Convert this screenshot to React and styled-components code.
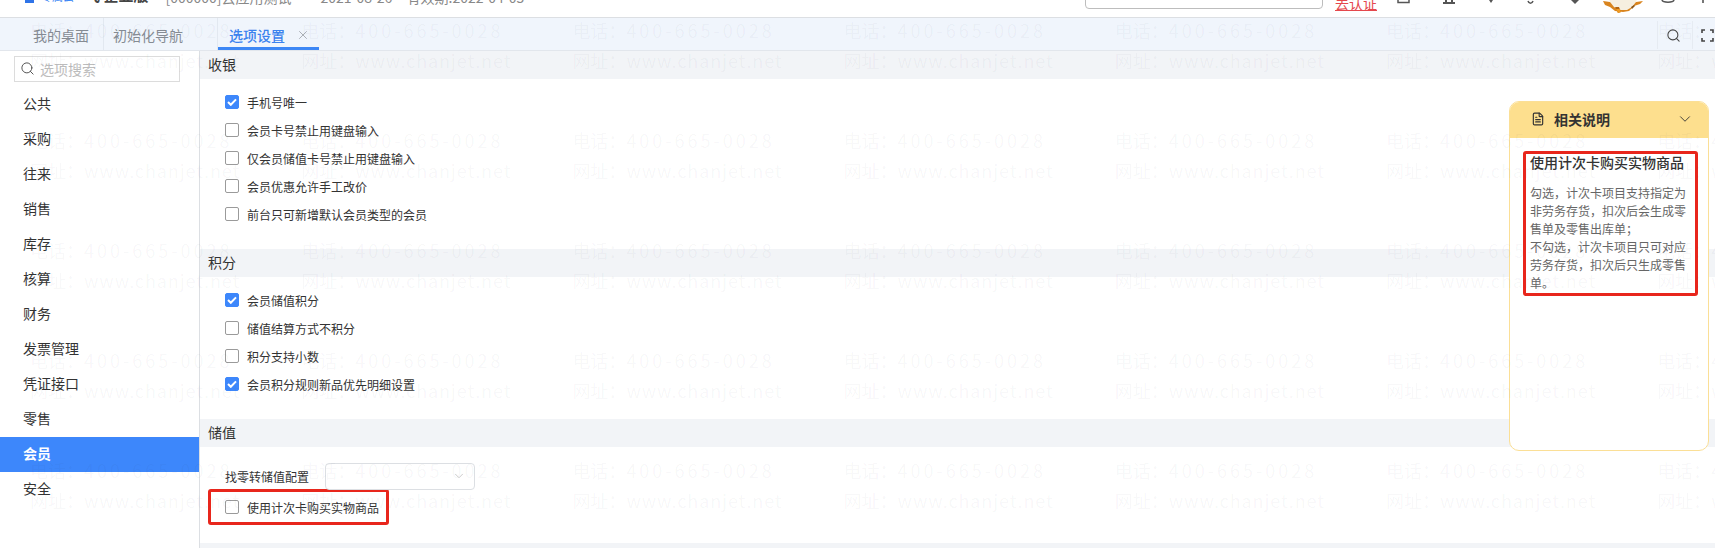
import React from "react";
import styled, { createGlobalStyle } from "styled-components";
import { Search, FileText, ChevronDown, X } from "lucide-react";

const GlobalStyle = createGlobalStyle`
  html, body { margin: 0; padding: 0; background: #fff; }
  body {
    font-family: "Noto Sans CJK SC", "Noto Sans", sans-serif;
    color: #333;
    overflow: hidden;
  }
`;

const Page = styled.div`
  position: relative;
  width: 1715px;
  height: 548px;
  overflow: hidden;
  display: flex;
  flex-direction: column;
`;

/* ---------- top header, cropped by the screenshot ---------- */
const Header = styled.header`
  height: 17px;
  flex: none;
  display: flex;
  justify-content: space-between;
  overflow: hidden;
  border-bottom: 1px solid #dcdfe3;
  background: #fff;
`;
const HeaderGroup = styled.div`
  display: flex;
  align-items: flex-start;
  padding-right: 2px;
`;
const HeaderText = styled.span`
  margin-left: ${(p) => p.$left}px;
  margin-top: ${(p) => p.$top}px;
  font-size: ${(p) => p.$size || 14}px;
  line-height: 20px;
  height: 20px;
  white-space: nowrap;
  font-weight: ${(p) => (p.$bold ? 700 : 400)};
  color: ${(p) => p.$color || "#888"};
  word-spacing: ${(p) => p.$wordGap || 0}px;
  ${(p) => p.$link && "text-decoration: underline;"}
`;
const BrandSquare = styled.span`
  width: 9px;
  height: 3px;
  margin-left: 25px;
  background: #2f74e8;
`;
const AuthInput = styled.div`
  width: 238px;
  height: 20px;
  margin-top: -11px;
  margin-right: 12px;
  box-sizing: border-box;
  border: 1px solid #bdbdbd;
  border-radius: 4px;
  background: #fff;
`;
const HeadIcon = styled.svg`
  display: block;
  margin-left: ${(p) => p.$left}px;
  flex: none;
`;

/* ---------- tab bar ---------- */
const TabBar = styled.nav`
  height: 33px;
  flex: none;
  box-sizing: border-box;
  display: flex;
  background: #f0f5fc;
  border-bottom: 1px solid #e2e6ec;
  padding-left: 23px;
`;
const Tab = styled.div`
  display: flex;
  align-items: center;
  height: 32px;
  box-sizing: border-box;
  padding: 2px ${(p) => p.$right}px 0 ${(p) => p.$leftPad || 10}px;
  font-size: 14px;
  color: ${(p) => (p.$active ? "#3b82ee" : "#858b93")};
  font-weight: ${(p) => (p.$active ? 500 : 400)};
  border-right: ${(p) => (p.$divider ? "1px solid #e2e8f0" : "none")};
  box-shadow: ${(p) => (p.$active ? "inset 0 -3px 0 #3d87f5" : "none")};
  svg { margin-left: 11px; color: #9a9fa6; }
`;
const TabTools = styled.div`
  margin-left: auto;
  display: flex;
`;
const TabTool = styled.div`
  width: ${(p) => p.$width}px;
  height: 28px;
  margin-top: 3px;
  display: flex;
  align-items: center;
  padding-left: 8px;
  box-sizing: border-box;
  border-left: 1px solid #e6ebf2;
  color: #444;
`;

/* ---------- body ---------- */
const Body = styled.div`
  flex: 1;
  display: flex;
  min-height: 0;
`;
const Sidebar = styled.aside`
  width: 200px;
  flex: none;
  box-sizing: border-box;
  border-right: 1px solid #dcdfe3;
  padding-top: 5px;
`;
const SearchBox = styled.div`
  width: 166px;
  height: 26px;
  margin: 0 0 5px 14px;
  box-sizing: border-box;
  border: 1px solid #dcdcdc;
  display: flex;
  align-items: center;
  padding: 0 0 1px 5px;
  gap: 5px;
  font-size: 14px;
  color: #bcbcbc;
  svg { color: #555; }
`;
const NavItem = styled.div`
  height: 35px;
  line-height: 33px;
  padding-left: 23px;
  font-size: 14px;
  color: ${(p) => (p.$active ? "#fff" : "#333")};
  background: ${(p) => (p.$active ? "#3d87fb" : "transparent")};
  font-weight: ${(p) => (p.$active ? 700 : 400)};
`;
const Main = styled.main`
  flex: 1;
  min-width: 0;
`;
const SectionBar = styled.div`
  height: 28px;
  line-height: 26px;
  padding-left: 8px;
  font-size: 14px;
  color: #333;
  background: #f2f4f7;
`;
const Options = styled.div`
  padding: 9px 0 21px 25px;
`;
const OptionRow = styled.label`
  height: 28px;
  display: flex;
  align-items: center;
  gap: 8px;
  font-size: 12px;
  color: #333;
`;
const Check = styled.span`
  width: 14px;
  height: 14px;
  box-sizing: border-box;
  flex: none;
  display: flex;
  align-items: center;
  justify-content: center;
  border-radius: 2px;
  background: ${(p) => (p.$on ? "#3d87fb" : "#fff")};
  border: 1px solid ${(p) => (p.$on ? "#3d87fb" : "#9a9a9a")};
`;
const ValueOptions = styled.div`
  padding: 15px 0 18px 0;
`;
const ConfigRow = styled.div`
  height: 28px;
  display: flex;
  align-items: center;
  padding-left: 25px;
  font-size: 12px;
  color: #333;
`;
const SelectBox = styled.div`
  width: 150px;
  height: 27px;
  margin-left: 16px;
  box-sizing: border-box;
  border: 1px solid #dcdfe3;
  border-radius: 4px;
  display: flex;
  align-items: center;
  justify-content: flex-end;
  padding-right: 8px;
  color: #b5b5b5;
`;
const RedFrame = styled.div`
  width: 181px;
  height: 36px;
  margin: -1px 0 0 8px;
  box-sizing: border-box;
  border: 3px solid #e8261c;
  border-radius: 3px;
  padding-left: 14px;
  display: flex;
  align-items: center;
  ${OptionRow} { height: auto; }
`;

/* ---------- floating help panel ---------- */
const HelpPanel = styled.section`
  position: absolute;
  left: 1509px;
  top: 101px;
  width: 200px;
  height: 350px;
  box-sizing: border-box;
  border: 1px solid #fbdf96;
  border-radius: 10px;
  background: #fff;
  overflow: hidden;
`;
const HelpHeader = styled.div`
  height: 36px;
  background: #fddf8e;
  display: flex;
  align-items: center;
  padding: 0 14px 2px 21px;
  box-sizing: border-box;
  font-size: 14px;
  font-weight: 700;
  color: #333;
  gap: 9px;
  svg:last-child { margin-left: auto; }
`;
const HelpFrame = styled.div`
  width: 175px;
  height: 145px;
  margin: 13px 0 0 13px;
  box-sizing: border-box;
  border: 3px solid #e8261c;
  border-radius: 3px;
  padding: 0 4px;
`;
const HelpTitle = styled.div`
  font-size: 14px;
  line-height: 18px;
  font-weight: 500;
  margin-top: -1px;
  color: #333;
  white-space: nowrap;
`;
const HelpText = styled.p`
  margin: 13px 0 0;
  font-size: 12px;
  line-height: 18px;
  color: #666;
  white-space: nowrap;
`;

/* ---------- watermark over the whole page ---------- */
const Watermark = styled.div`
  position: absolute;
  inset: 0;
  pointer-events: none;
  padding: 15px 0 0 30px;
  display: grid;
  grid-template-columns: repeat(7, 271.2px);
  grid-auto-rows: 110px;
  overflow: hidden;
`;
const WatermarkTile = styled.div`
  font-size: 18px;
  line-height: 30px;
  color: rgba(40, 50, 70, 0.045);
  white-space: nowrap;
`;
const WatermarkValue = styled.span`
  letter-spacing: ${(p) => p.$spacing}px;
`;

const navItems = ["公共", "采购", "往来", "销售", "库存", "核算", "财务", "发票管理", "凭证接口", "零售", "会员", "安全"];
const cashierOptions = [
  { label: "手机号唯一", on: true },
  { label: "会员卡号禁止用键盘输入" },
  { label: "仅会员储值卡号禁止用键盘输入" },
  { label: "会员优惠允许手工改价" },
  { label: "前台只可新增默认会员类型的会员" },
];
const pointOptions = [
  { label: "会员储值积分", on: true },
  { label: "储值结算方式不积分" },
  { label: "积分支持小数" },
  { label: "会员积分规则新品优先明细设置", on: true },
];

function Option({ label, on }) {
  return (
    <OptionRow>
      <Check $on={on}>
        {on && (
          <svg width="10" height="8" viewBox="0 0 10 8" fill="none">
            <path d="M1 4l2.8 2.8L9 1.4" stroke="#fff" strokeWidth="2" />
          </svg>
        )}
      </Check>
      {label}
    </OptionRow>
  );
}

function Mascot() {
  return (
    <HeadIcon $left={22} width="42" height="14" viewBox="0 0 42 14">
      <circle cx="21" cy="-3" r="14" fill="#f6efe0" />
      <path d="M1 1l7 1 4 5 5 3h8l5-3 4-5 7-1-3 3-6 2-5 5-6 1-8-1-5-4-5-2z" fill="#d9841e" />
      <path d="M13 7l3 6 3-1-2-5z" fill="#b5650f" />
      <path d="M14 9l2 4 3-1-1-3z" fill="#ef9a23" />
      <path d="M29 7l3-2 1 1-3 3z" fill="#8a5518" />
    </HeadIcon>
  );
}

export default function App() {
  const tiles = Array.from({ length: 35 });
  return (
    <Page>
      <GlobalStyle />
      <Header>
        <HeaderGroup>
          <BrandSquare />
          <HeaderText $left={7} $top={-14} $size={11} $color="#3d87f5">专属云</HeaderText>
          <HeaderText $left={11} $top={-15} $size={15} $bold $color="#444">飞 企业版</HeaderText>
          <HeaderText $left={17} $top={-13}>[000000]云应用测试</HeaderText>
          <HeaderText $left={29} $top={-13} $wordGap={11}>2021-08-26 有效期:2022-04-05</HeaderText>
        </HeaderGroup>
        <HeaderGroup>
          <AuthInput />
          <HeaderText $left={0} $top={-7} $color="#e5484d" $link>去认证</HeaderText>
          <HeadIcon $left={20} width="13" height="4" viewBox="0 0 13 4"><path d="M1 0v2.5h11V0" fill="none" stroke="#555" strokeWidth="1.5" /></HeadIcon>
          <HeadIcon $left={33} width="12" height="4" viewBox="0 0 12 4"><path d="M0 3h12M3 0v3h6V0" fill="none" stroke="#555" strokeWidth="2" /></HeadIcon>
          <HeadIcon $left={32} width="8" height="4" viewBox="0 0 8 4"><path d="M2 0h4l-2 3z" fill="#555" /></HeadIcon>
          <HeadIcon $left={32} width="8" height="4" viewBox="0 0 8 4"><path d="M1 1c1 3 4 3 5 0" fill="none" stroke="#555" strokeWidth="1.5" /></HeadIcon>
          <HeadIcon $left={35} width="10" height="4" viewBox="0 0 10 4"><path d="M1 0h8l-4 4z" fill="#555" /></HeadIcon>
          <Mascot />
          <HeadIcon $left={17} width="14" height="4" viewBox="0 0 14 4"><path d="M1 0c1 3 11 3 12 0" fill="none" stroke="#555" strokeWidth="1.6" /></HeadIcon>
          <HeadIcon $left={26} width="12" height="4" viewBox="0 0 12 4"><path d="M2 0v3" fill="none" stroke="#555" strokeWidth="1.6" /></HeadIcon>
        </HeaderGroup>
      </Header>

      <TabBar>
        <Tab $right={14} $divider>我的桌面</Tab>
        <Tab $right={34} $leftPad={9} $divider>初始化导航</Tab>
        <Tab $active $right={9} $leftPad={11}>
          选项设置
          <X size={14} strokeWidth={1.4} />
        </Tab>
        <TabTools>
          <TabTool $width={35}><Search size={15} strokeWidth={1.7} /></TabTool>
          <TabTool $width={23}>
            <svg width="13" height="13" viewBox="0 0 13 13" fill="none" stroke="#444" strokeWidth="1.6">
              <path d="M1 4V1h3M9 1h3v3M12 9v3H9M4 12H1V9" />
            </svg>
          </TabTool>
        </TabTools>
      </TabBar>

      <Body>
        <Sidebar>
          <SearchBox>
            <Search size={15} strokeWidth={1.6} />
            选项搜索
          </SearchBox>
          {navItems.map((item) => (
            <NavItem key={item} $active={item === "会员"}>{item}</NavItem>
          ))}
        </Sidebar>
        <Main>
          <SectionBar>收银</SectionBar>
          <Options>
            {cashierOptions.map((o) => <Option key={o.label} {...o} />)}
          </Options>
          <SectionBar>积分</SectionBar>
          <Options>
            {pointOptions.map((o) => <Option key={o.label} {...o} />)}
          </Options>
          <SectionBar>储值</SectionBar>
          <ValueOptions>
            <ConfigRow>
              找零转储值配置
              <SelectBox><ChevronDown size={14} strokeWidth={1.2} /></SelectBox>
            </ConfigRow>
            <RedFrame>
              <Option label="使用计次卡购买实物商品" />
            </RedFrame>
          </ValueOptions>
          <SectionBar />
        </Main>
      </Body>

      <HelpPanel>
        <HelpHeader>
          <FileText size={14} strokeWidth={2} />
          相关说明
          <ChevronDown size={18} strokeWidth={1.2} />
        </HelpHeader>
        <HelpFrame>
          <HelpTitle>使用计次卡购买实物商品</HelpTitle>
          <HelpText>
            勾选，计次卡项目支持指定为<br />
            非劳务存货，扣次后会生成零<br />
            售单及零售出库单；<br />
            不勾选，计次卡项目只可对应<br />
            劳务存货，扣次后只生成零售<br />
            单。
          </HelpText>
        </HelpFrame>
      </HelpPanel>

      <Watermark>
        {tiles.map((_, i) => (
          <WatermarkTile key={i}>
            电话：<WatermarkValue $spacing={3}>400-665-0028</WatermarkValue>
            <br />
            网址：<WatermarkValue $spacing={0.9}>www.chanjet.net</WatermarkValue>
          </WatermarkTile>
        ))}
      </Watermark>
    </Page>
  );
}
